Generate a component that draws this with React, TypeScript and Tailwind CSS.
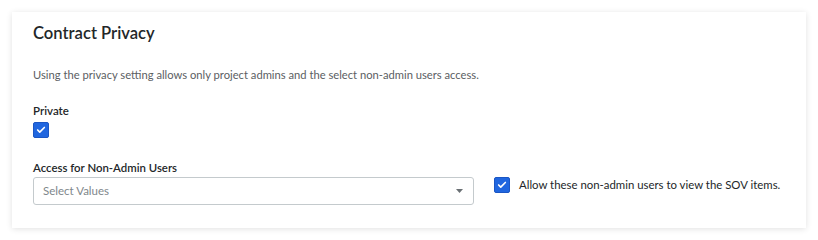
import { Check } from 'lucide-react';

function Checkbox() {
  return (
    <span className="flex h-4 w-4 shrink-0 items-center justify-center rounded-[2px] border border-[#1b56c4] bg-[#2066df]">
      <Check className="h-2.5 w-2.5 text-white" strokeWidth={4} />
    </span>
  );
}

export default function App() {
  return (
    <div className="min-h-[240px] w-[818px] bg-white p-3 font-['Lato',sans-serif] text-[#232729]">
      <div className="h-[216px] w-[794px] bg-white px-[21px] pt-px shadow-[0_1px_6px_rgba(0,0,0,0.12)]">
        <h2 className="text-[16.6px] font-semibold leading-[40px]">Contract Privacy</h2>
        <p className="mt-[14px] text-[11.2px] leading-[16px] text-[#5b6063]">
          Using the privacy setting allows only project admins and the select non-admin users access.
        </p>
        <div className="mt-[20px] text-[11.5px] font-semibold leading-[16px]">Private</div>
        <div className="mt-[3px]">
          <Checkbox />
        </div>
        <div className="mt-[22px] flex items-start gap-5">
          <div className="w-[441px] shrink-0">
            <div className="text-[11.4px] font-semibold leading-[16px]">Access for Non-Admin Users</div>
            <div className="mt-px flex h-[28px] items-center justify-between rounded-[3px] border border-[#c4cacd] pl-[9px] pr-[10px] text-[11.5px] text-[#80878b]">
              <span>Select Values</span>
              <svg width="7" height="4" viewBox="0 0 7 4">
                <path d="M0 0h7L3.5 4z" fill="#6a7074" />
              </svg>
            </div>
          </div>
          <div className="mt-[17px] flex items-center gap-[9px]">
            <Checkbox />
            <span className="whitespace-nowrap text-[11.4px] leading-[16px]">Allow these non-admin users to view the SOV items.</span>
          </div>
        </div>
      </div>
    </div>
  );
}
